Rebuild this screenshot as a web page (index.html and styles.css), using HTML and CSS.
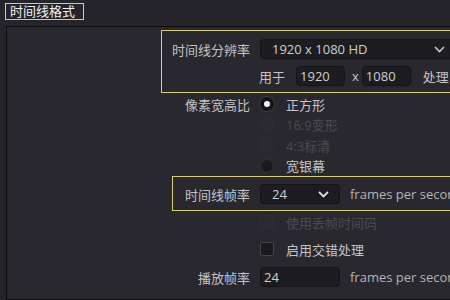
FILE: index.html
```html
<!DOCTYPE html>
<html lang="zh-CN">
<head>
  <meta charset="UTF-8">
  <title>时间线格式</title>
  <link rel="stylesheet" href="styles.css">
</head>
<body>

<div class="tab-title">时间线格式</div>

<div class="panel">

  <!-- Resolution -->
  <div class="hl hl-res">
    <div class="row">
      <label class="lbl">时间线分辨率</label>
      <div class="select wide">
        <span>1920 x 1080 HD</span>
        <svg class="chev" width="11" height="7" viewBox="0 0 11 7"><path d="M1 1 L5.5 5.5 L10 1" fill="none" stroke="#c8c8c8" stroke-width="1.6"/></svg>
      </div>
    </div>
    <div class="row size-row">
      <span class="txt for">用于</span>
      <div class="field num">1920</div>
      <span class="txt x">x</span>
      <div class="field num">1080</div>
      <span class="txt proc">处理</span>
    </div>
  </div>

  <!-- Pixel aspect -->
  <div class="row radio-row first">
    <label class="lbl">像素宽高比</label>
    <span class="radio on"></span>
    <span class="txt">正方形</span>
  </div>
  <div class="row radio-row">
    <span class="lbl"></span>
    <span class="radio off"></span>
    <span class="txt dim">16:9变形</span>
  </div>
  <div class="row radio-row">
    <span class="lbl"></span>
    <span class="radio off"></span>
    <span class="txt dim">4:3标清</span>
  </div>
  <div class="row radio-row">
    <span class="lbl"></span>
    <span class="radio"></span>
    <span class="txt">宽银幕</span>
  </div>

  <!-- Frame rate -->
  <div class="hl hl-fps">
    <div class="row">
      <label class="lbl">时间线帧率</label>
      <div class="select short">
        <span>24</span>
        <svg class="chev" width="11" height="7" viewBox="0 0 11 7"><path d="M1 1 L5.5 5.5 L10 1" fill="none" stroke="#e0e0e0" stroke-width="1.8"/></svg>
      </div>
      <span class="txt unit">frames per second</span>
    </div>
  </div>

  <div class="row check-row drop">
    <span class="lbl"></span>
    <span class="check off"></span>
    <span class="txt dim">使用丢帧时间码</span>
  </div>
  <div class="row check-row interlace">
    <span class="lbl"></span>
    <span class="check"></span>
    <span class="txt">启用交错处理</span>
  </div>

  <div class="row play-row">
    <label class="lbl">播放帧率</label>
    <div class="field short">24</div>
    <span class="txt unit">frames per second</span>
  </div>

</div>

</body>
</html>
```

FILE: styles.css
```css
:root {
  --bg: #24242a;
  --panel: #28282e;
  --text: #c4c4c6;
  --dim: #4c4c52;
  --field: #1d1d21;
  --hl: #d9cf6c;
}

html, body {
  margin: 0;
  height: 100%;
  overflow: hidden;
}

body {
  background: var(--bg);
  font-family: "Open Sans", "Noto Sans CJK SC", sans-serif;
  font-size: 13px;
  color: var(--text);
}

.tab-title {
  display: inline-block;
  margin: 3px 0 0 5px;
  padding: 0 8px 0 4px;
  height: 15px;
  line-height: 15px;
  border: 1px solid var(--hl);
  color: #f2f2f2;
  font-size: 13px;
}

.panel {
  margin: 6px 0 0 6px;
  height: 272px;
  width: 460px;
  background: var(--panel);
  border-top: 1px solid #0d0d10;
  border-left: 1px solid #0d0d10;
  border-bottom: 1px solid #0d0d10;
}

.row {
  display: flex;
  align-items: center;
  height: 20px;
}

.lbl {
  width: 253px;
  flex: none;
  text-align: right;
  padding-right: 10px;
  box-sizing: border-box;
  white-space: nowrap;
}

.txt {
  white-space: nowrap;
}

.dim {
  color: var(--dim);
}

/* highlight boxes */
.hl {
  border: 1px solid var(--hl);
  border-right: none;
}

.hl-res {
  margin: 3px 0 0 154px;
  padding: 8px 0 6px;
}

.hl-res .lbl {
  width: 98px;
}

.hl-fps {
  margin: 0 0 0 165px;
  padding: 7px 0 6px;
}

.hl-fps .lbl {
  width: 87px;
}

/* selects and fields */
.select, .field {
  height: 20px;
  box-sizing: border-box;
  background: var(--field);
  border: 1px solid #141417;
  border-radius: 4px;
  display: flex;
  align-items: center;
  color: #cfcfd1;
  flex: none;
}

.select {
  justify-content: space-between;
  padding: 0 10px 0 11px;
}

.select.wide {
  width: 196px;
}

.select.short {
  width: 80px;
}

.field {
  padding: 0 3px;
}

.field.short {
  width: 80px;
}

.field.num {
  width: 49px;
}

.size-row {
  margin-top: 7px;
  padding-left: 97px;
}

.size-row .for {
  padding-right: 11px;
}

.size-row .x {
  padding: 0 3px 0 7px;
}

.size-row .proc {
  padding-left: 12px;
}

.unit {
  padding-left: 10px;
  color: #b4b4b6;
  font-size: 13px;
}

/* radios */
.radio-row.first {
  margin-top: 1px;
}

.radio-row {
  height: 20.5px;
}

.radio, .check {
  width: 14px;
  height: 14px;
  box-sizing: border-box;
  flex: none;
  margin-right: 12px;
  background: #1b1b1f;
  border: 1px solid #323237;
}

.radio {
  border-radius: 50%;
}

.radio.on {
  background: #f4f4f4;
  border: 4px solid #141416;
  box-shadow: 0 0 0 1px #3a3a3e;
}

.radio.off, .check.off {
  background: #2a2a30;
  border-color: #2e2e33;
}

.check {
  border-radius: 2px;
  border-color: #44444a;
}

.drop {
  margin-top: 1px;
}

.interlace {
  margin-top: 7px;
}

.play-row {
  margin-top: 8px;
}
```
